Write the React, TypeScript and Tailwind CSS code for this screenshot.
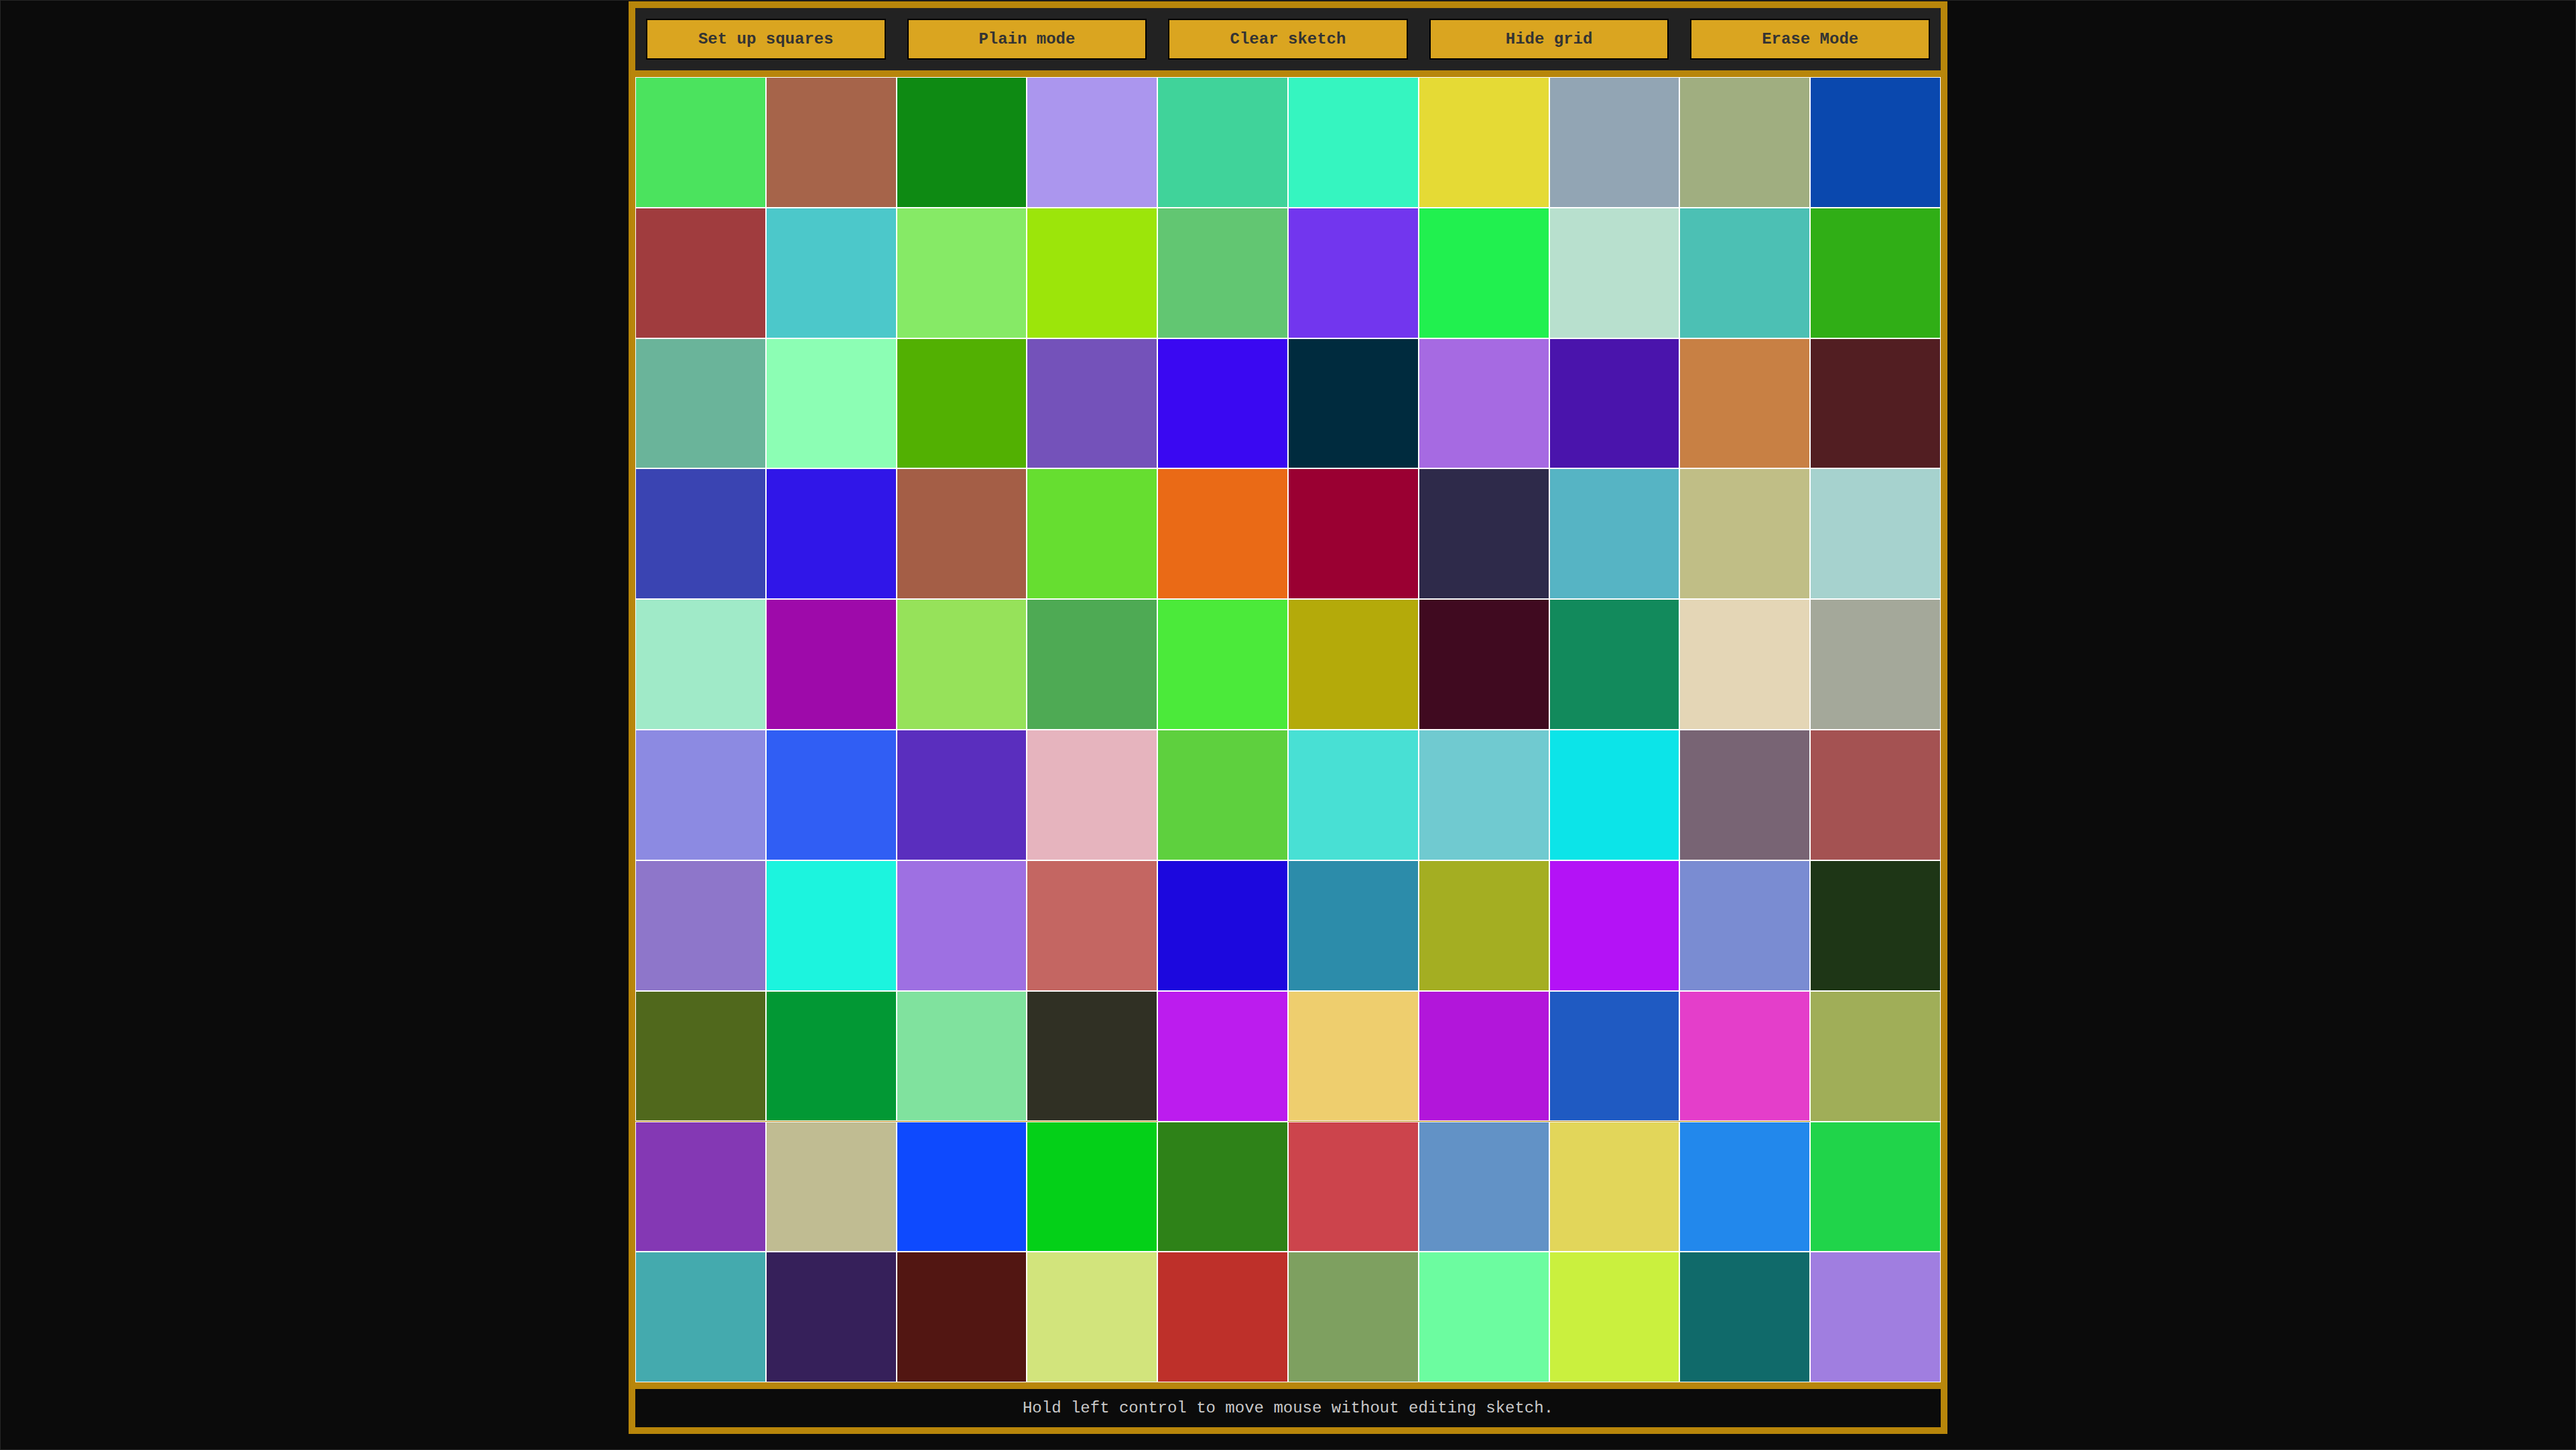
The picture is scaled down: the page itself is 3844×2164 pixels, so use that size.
const colors = [
  ["#4be35e", "#a6644a", "#0e8a13", "#ab96ee", "#40d39a", "#35f5c0", "#e5da35", "#92a5b4", "#a0ae80", "#0a48ae"],
  ["#a03c3e", "#4cc8ca", "#86ea66", "#9ce50a", "#62c672", "#7236ee", "#21f04f", "#b8e0ce", "#4cc0b4", "#30ae16"],
  ["#6ab49a", "#8cfeb4", "#52b002", "#7452ba", "#3a08f2", "#002b3e", "#a66ae2", "#4a14ac", "#c88044", "#521e22"],
  ["#3a44b2", "#3016e8", "#a45e46", "#66de30", "#ea6a16", "#9a0032", "#2e2a4a", "#56b4c4", "#c0be86", "#a6d2ce"],
  ["#a0eac8", "#9e0aaa", "#96e25a", "#4eaa54", "#4bea3a", "#b4aa0a", "#400a20", "#128a5c", "#e4d6b6", "#a4a89a"],
  ["#8c8ae2", "#305ef4", "#5a2ebe", "#e6b4be", "#5ed03e", "#48e0d4", "#70cad0", "#0ce4e8", "#786474", "#a45252"],
  ["#8e76ca", "#1cf4de", "#9e70e2", "#c46662", "#1c08de", "#2c8caa", "#a4ae22", "#b412f6", "#7a8cd2", "#1e3616"],
  ["#50681c", "#029834", "#80e29e", "#303024", "#bc1cee", "#eece6e", "#b216da", "#1f5ac2", "#e43eca", "#a0ae58"],
  ["#8438b4", "#c0bc92", "#0e4afe", "#04d018", "#2e8218", "#cc444c", "#6292c6", "#e2d65a", "#2288ec", "#20d44a"],
  ["#44aaae", "#36205a", "#521612", "#d2e47c", "#be302a", "#7ea060", "#6cfca0", "#caf03e", "#106a6a", "#a07ee0"],
];

const buttons = ["Set up squares", "Plain mode", "Clear sketch", "Hide grid", "Erase Mode"];

export default function App() {
  return (
    <div className="min-h-screen bg-[#0b0b0b] border border-[#262626] pt-px font-['Liberation_Mono','Courier_New',monospace]">
      <div className="w-[1968px] mx-auto border-[10px] border-[#b8860b] bg-[#b8860b] flex flex-col gap-[10px]">
        {/* toolbar */}
        <div className="bg-[#222222] p-4 flex gap-8">
          {buttons.map((label) => (
            <button
              key={label}
              className="flex-1 h-[61px] bg-[#daa520] border-2 border-black text-[#333333] text-[24px] font-bold"
            >
              {label}
            </button>
          ))}
        </div>

        {/* sketch grid */}
        <div className="grid grid-cols-10">
          {colors.flat().map((c, i) => (
            <div key={i} className="aspect-square border border-white" style={{ backgroundColor: c }} />
          ))}
        </div>

        {/* hint */}
        <div className="h-[57px] bg-[#0b0b0b] flex items-center justify-center text-[24px] text-[#c8c8c8]">
          Hold left control to move mouse without editing sketch.
        </div>
      </div>
    </div>
  );
}
